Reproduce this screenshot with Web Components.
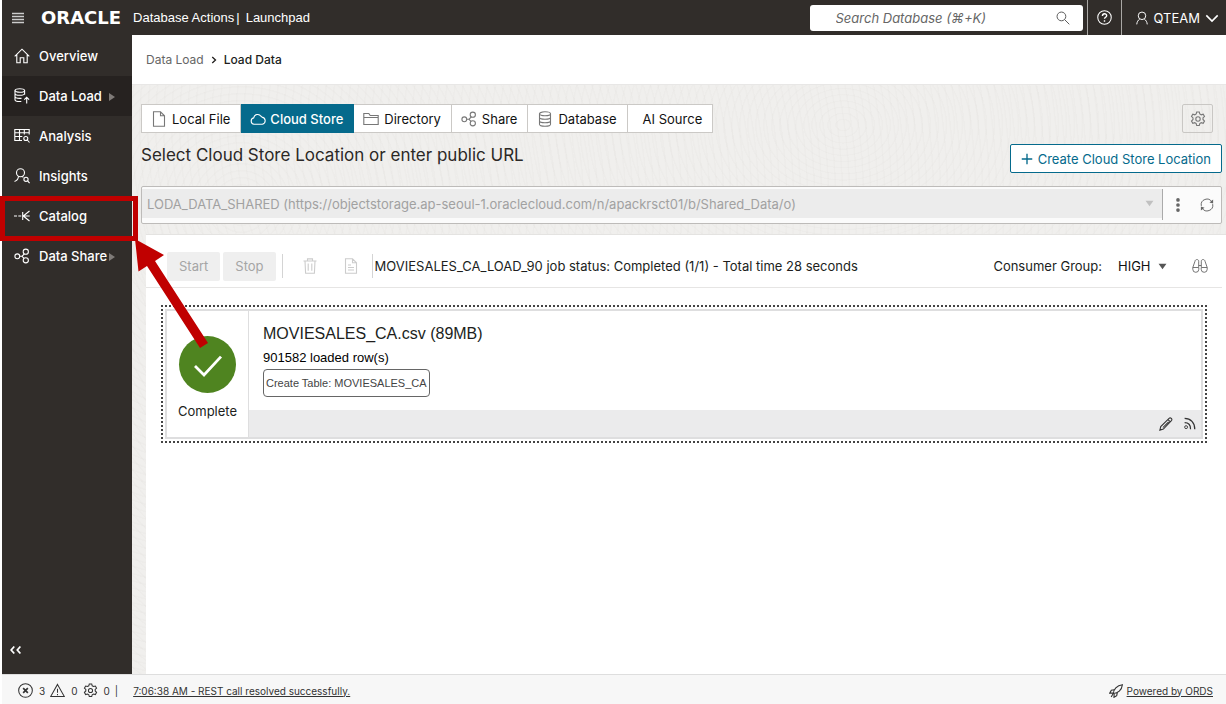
<!DOCTYPE html>
<html lang="en">
<head>
<meta charset="utf-8">
<title>Database Actions | Launchpad</title>
<style>
  html, body { margin: 0; background: #fff; }
  body { font: 13px/20px Inter, "Liberation Sans", sans-serif; color: #201e1c; }
</style>
</head>
<body>
<db-app></db-app>

<script>
const RESET = `*{box-sizing:border-box} button,input,select{font:inherit;color:inherit;margin:0;padding:0;border:0;background:none;border-radius:0} a{color:inherit;text-decoration:none}`;

function define(name, css, html) {
  const tpl = document.createElement('template');
  tpl.innerHTML = `<style>${RESET}${css}</style>${html}`;
  customElements.define(name, class extends HTMLElement {
    constructor() {
      super();
      this.attachShadow({ mode: 'open' }).append(tpl.content.cloneNode(true));
    }
  });
}

/* Icon set, each drawn on a 16 unit grid */
const ICONS = {
  menu: '<path stroke-width="1.8" d="M0 2h16M0 6h16M0 10h16M0 14h16"/>',
  home: '<path d="M.7 8.300L8 1.200l7.300 7.100M2.800 6.500v8.200h3.400V9.800h3.600v4.900h3.400V6.500"/>',
  load: '<ellipse cx="5.800" cy="2.500" rx="4.800" ry="1.800"/><path d="M1 2.500v9.200c0 1 2 1.800 4.800 1.800h1.500M10.600 2.500v4.200M1 5.500c0 1 2 1.800 4.800 1.800s4.800-.8 4.800-1.800M1 8.600c0 1 2 1.800 4.800 1.800h1.700M12.700 15.500V9.500M10.300 11.700l2.400-2.400 2.400 2.400"/>',
  analysis: '<path d="M8 12.500H.8V1.500h14.400v5M.8 4.700h14.400M.8 8.500h7.500M5.500 1.500v11M10.300 1.500v5"/><circle cx="11.800" cy="10.500" r="2"/><path d="M13.300 12l2.200 2.500"/>',
  insights: '<circle cx="6.500" cy="4.800" r="4"/><path d="M4.500 8.300C4.300 11 2.800 12.800.5 13.500M8.500 8.300l.7 1.200"/><circle cx="12" cy="11.300" r="2.100"/><path d="M13.600 12.900l2 2.200"/>',
  catalog: '<path d="M0 8h3M4.300 8h3M8.700 8h7M8.700 4v8M9 8.300L15.500 3M9 7.700L15.500 13"/>',
  share: '<circle cx="3.300" cy="8.300" r="2.400"/><circle cx="11.800" cy="3.700" r="2.600"/><circle cx="11.800" cy="12.300" r="2.600"/><path d="M5.700 8.300h2.300M10.300 5.900L8 8.300l2 2.100"/>',
  file: '<path d="M2.500.8h7l4 4v10.400h-11zM9.500.8v4h4"/>',
  cloud: '<path d="M4 13.200a3.200 3.200 0 0 1-.3-6.300 4 4 0 0 1 7.300-1.600 3.300 3.300 0 0 1 1 .8 3.600 3.600 0 0 1 .3 7.100z"/>',
  folder: '<path d="M.8 13.500v-11h5l1.400 2h8v9zM.8 6.500h14.400"/>',
  database: '<ellipse cx="8" cy="2.800" rx="5.500" ry="2"/><path d="M2.500 2.800v10.400c0 1.100 2.500 2 5.500 2s5.500-.9 5.500-2V2.800M2.500 6.200c0 1.100 2.500 2 5.500 2s5.500-.9 5.500-2M2.500 9.700c0 1.100 2.500 2 5.500 2s5.500-.9 5.500-2"/>',
  gear: '<circle cx="8" cy="8" r="2.200"/><path d="M6.700 1h2.600l.5 2 1.400.8 2-.6 1.300 2.300-1.500 1.400v1.600l1.500 1.500-1.300 2.300-2-.6-1.400.8-.5 2H6.700l-.5-2-1.400-.8-2 .6L1.500 10l1.500-1.500V6.900L1.500 5.500l1.300-2.300 2 .6 1.400-.8z"/>',
  search: '<circle cx="6.200" cy="6.200" r="5"/><path d="M9.800 9.800l5.400 5.400"/>',
  help: '<circle cx="8" cy="8" r="7.200"/><path stroke-width="1.500" d="M5.800 6.300c0-3 4.500-3 4.500-.3 0 1.700-2.300 1.700-2.300 3.400M8 11v1.400"/>',
  user: '<circle cx="8" cy="5.500" r="4.300"/><path d="M5.500 9C3.500 10.500 2.200 12.500 2 15.300M10.500 9c2 1.500 3.300 3.500 3.500 6.300"/>',
  chevron: '<path stroke-width="1.800" d="M1.500 5L8 11.500 14.500 5"/>',
  next: '<path stroke-width="2.600" d="M4.500 2L11 8l-6.500 6"/>',
  plus: '<path stroke-width="1.800" d="M8 1v14M1 8h14"/>',
  dots: '<g fill="currentColor" stroke="none"><circle cx="8" cy="2.200" r="2.100"/><circle cx="8" cy="8" r="2.100"/><circle cx="8" cy="13.800" r="2.100"/></g>',
  refresh: '<path d="M1.500 9A6.500 6.500 0 0 1 13.500 4.500M14.500 7A6.500 6.500 0 0 1 2.500 11.500"/><path fill="currentColor" stroke="none" d="M15 1.800v4.400l-4.200-1.200zM1 14.200V9.800L5.200 11z"/>',
  trash: '<path d="M1.500 3h13M5.500 3V.9h5V3M3 3l.6 12.200h8.800L13 3M6.200 5.500v7.200M9.800 5.500v7.200"/>',
  doc: '<path d="M2.500.8h7l4 4v10.400h-11zM9.500.8v4h4M5 7h3M5 9.500h6M5 12h6"/>',
  binoculars: '<path stroke-width=".9" d="M3 3.200C3.300 1 6.700 1 6.700 3.200V9M13 3.200C12.700 1 9.300 1 9.300 3.200V9M3 3.200L.8 9.500v1.800a3 3 0 0 0 6 0V9.500h-6M13 3.200l2.200 6.300v1.800a3 3 0 0 1-6 0V9.500h6M6.800 7.500h2.400"/>',
  check: '<path d="M1.500 8.500l4.500 4.500L14.500 3.800"/>',
  pencil: '<path stroke-width="1.200" d="M1 15l1-4L11.500 1.500c1.700-1.500 4.200 1 2.700 2.700L5 13.800zM10.300 3l2.700 2.700M4.500 12l6.500-6.500"/>',
  feed: '<circle cx="3.800" cy="12.500" r="1.800"/><path stroke-width="1.500" d="M2 7c4.500 0 7.300 3 7.300 8M2 1.800c7.500 0 12.500 5 12.500 13.200"/>',
  collapse: '<path stroke-width="2" d="M6 4L2.500 8 6 12M13 4L9.500 8l3.500 4"/>',
  error: '<circle cx="8" cy="8" r="7.300"/><path stroke-width="1.800" d="M5.500 5.500l5 5M10.500 5.500l-5 5"/>',
  warning: '<path d="M8 1.500L15.300 14.500H.7zM8 6v4.500M8 11.700v1.300"/>',
  rocket: '<path stroke-width="1.300" d="M5 10.800c0-4.500 4-9.300 10.300-10C14.600 7 10 11 5 10.800zM6 6.500l-3.300.7L.8 10.500l4.200-.2M9.500 10l-.7 3.300L5.700 15.200l.2-4M4.500 11.500l-2 3.300"/>',
  caret: '<path fill="currentColor" stroke="none" d="M1 3h14L8 13z"/>',
  arrow: '<path fill="currentColor" stroke="none" d="M2 0v16l12-8z"/>'
};
customElements.define('db-icon', class extends HTMLElement {
  connectedCallback() {
    if (this.shadowRoot) return;
    const s = this.getAttribute('size') || 16;
    this.attachShadow({ mode: 'open' }).innerHTML =
      `<style>:host{display:inline-flex;flex:none}svg{display:block;fill:none;stroke:currentColor;stroke-width:var(--stroke,1.1)}</style>
       <svg width="${s}" height="${s}" viewBox="0 0 16 16" aria-hidden="true">${ICONS[this.getAttribute('name')]}</svg>`;
  }
});

define('db-header', `
  :host{display:flex;align-items:stretch;height:35px;background:#312d2a;color:#fff;font-family:"Liberation Sans",sans-serif}
  .menu{padding:0 10px;display:flex;align-items:center;color:#ccc}
  .brand{display:flex;align-items:center;flex:1;font-size:13px;white-space:nowrap}
  .logo{font:bold 18px/20px "DejaVu Sans",sans-serif;padding-left:7px;margin-right:12px;flex:none}
  .sep{margin:0 6px 0 2px}
  .search{align-self:center;display:flex;align-items:center;flex:0 1 273px;height:26px;margin-right:4px;padding:0 13px 0 26px;background:#fff;border-radius:3px;color:#555}
  input{flex:1;min-width:0;font:italic 13px/20px Inter,"DejaVu Sans",sans-serif;outline:0}
  input::placeholder{color:#666;opacity:1}
  .help,.user{display:flex;align-items:center;border-left:1px solid #aaa8a5}
  .help{width:34px;justify-content:center}
  .user{padding:0 7px 0 13px;gap:5px;font:13px/20px Inter,sans-serif}
`, `
  <button class="menu" aria-label="Menu"><db-icon name="menu" size="12"></db-icon></button>
  <div class="brand"><span class="logo">ORACLE</span><span>Database Actions</span><span class="sep">|</span><span>Launchpad</span></div>
  <label class="search"><input type="search" placeholder="Search Database (⌘+K)" aria-label="Search Database"><db-icon name="search" size="14"></db-icon></label>
  <button class="help" aria-label="Help"><db-icon name="help" size="15"></db-icon></button>
  <button class="user"><db-icon name="user" size="14"></db-icon>QTEAM<db-icon name="chevron" size="14"></db-icon></button>
`);

define('db-nav-item', `
  :host{display:block}
  :host([active]) a{background:#262220}
  a{display:flex;align-items:center;height:40px;padding-left:12px;gap:9px;color:#fff;font-weight:500}
  .text{flex:0 0 69px;white-space:nowrap}
  .more{display:none;color:#7f7b78;margin-left:-9px}
  :host([more]) .more{display:block}
`, `<a href="#"><slot name="icon"></slot><span class="text"><slot></slot></span><span class="more"><db-icon name="arrow" size="8"></db-icon></span></a>`);

define('db-nav', `
  :host{display:flex;flex-direction:column;flex:0 0 130px;background:#312d2a;color:#fff}
  nav{flex:1;padding-top:1px}
  button{align-self:flex-start;padding:0 0 17px 7px;display:flex}
`, `<nav><slot></slot></nav><button aria-label="Collapse"><db-icon name="collapse" size="14"></db-icon></button>`);

define('db-breadcrumbs', `
  :host{display:flex;align-items:center;gap:6px;height:49px;padding:1px 0 0 14px;background:#fff;font-size:12px}
  a{color:#666}
  b{font-weight:500}
`, `<a href="#">Data Load</a><db-icon name="next" size="8"></db-icon><b>Load Data</b>`);

define('db-tab', `
  :host{display:block}
  button{display:flex;align-items:center;gap:5px;height:29px;padding:0 10px 0 9px;background:#fff;border:1px solid #cbc9c6;border-left-width:0;color:#111;white-space:nowrap}
  :host([first]) button{border-left-width:1px}
  :host([selected]) button{background:#056a8c;border-color:#056a8c;color:#fff;font-weight:500;gap:4px}
  :host([plain]) button{padding-left:15px}
  ::slotted(db-icon){color:#777}
  :host([selected]) ::slotted(db-icon){color:#fff}
`, `<button role="tab"><slot name="icon"></slot><span><slot></slot></span></button>`);

define('db-tools', `
  :host{display:flex;justify-content:space-between;padding-right:13px}
  .tabs{display:flex}
  .set{width:31px;height:29px;border:1px solid #c9c7c4;border-radius:2px;display:flex;align-items:center;justify-content:center;color:#777}
`, `<div class="tabs" role="tablist"><slot></slot></div><button class="set" aria-label="Settings"><db-icon name="gear"></db-icon></button>`);

define('db-location', `
  :host{display:block;padding-right:4px}
  .row{display:flex;justify-content:space-between;height:52px}
  h1{margin:0;padding-top:10px;font-size:17px;line-height:24px;font-weight:400;color:#2b2826}
  .create{align-self:flex-start;margin-top:11px;height:29px;padding:0 10px;display:flex;align-items:center;gap:5px;border:1px solid #056a8c;border-radius:2px;background:#fff;color:#056a8c;white-space:nowrap}
  .bar{display:flex;height:38px;padding-top:2px;margin-top:1px;border:1px solid #bdbbb9;border-radius:2px;background:#fbfbfb}
  .pick{flex:1;display:flex;align-items:center;height:29px;background:#ececec;padding:0 8px 0 5px;color:#c0c0c0;min-width:0}
  select{appearance:none;flex:1;color:#a1a1a1;opacity:1;min-width:0}
  .act{display:flex;align-items:center;gap:15px;padding:0 7px 0 8px;border-left:1px solid #aaa;height:31px}
  .act button{display:flex;color:#666}
`, `
  <div class="row"><h1>Select Cloud Store Location or enter public URL</h1>
  <button class="create"><db-icon name="plus" size="12"></db-icon>Create Cloud Store Location</button></div>
  <div class="bar"><div class="pick"><select disabled aria-label="Cloud store location"><option>LODA_DATA_SHARED (https://objectstorage.ap-seoul-1.oraclecloud.com/n/apackrsct01/b/Shared_Data/o)</option></select><db-icon name="caret" size="9"></db-icon></div>
  <div class="act"><button aria-label="More"><db-icon name="dots" size="14"></db-icon></button><button aria-label="Refresh"><db-icon name="refresh" size="14"></db-icon></button></div></div>
`);

define('db-job-bar', `
  :host{display:flex;align-items:center;height:53px;padding:10px 14px 0 21px;margin-right:4px;border-bottom:1px solid #e6e5e4}
  .b{height:29px;padding:0 12px;background:#efefef;color:#a5a5a5;border-radius:2px;margin-right:3px}
  .line{width:1px;height:24px;background:#d4d4d4}
  .start{margin-left:3px}
  .tools{display:flex;gap:25px;margin:0 13px 0 19px;color:#ccc}
  .tools button{display:flex}
  .status{flex:1;padding-left:2px;white-space:nowrap}
  label{margin-right:16px;white-space:nowrap}
  .group{display:flex;align-items:center;gap:7px;margin-right:25px;color:#555}
  select{appearance:none;color:#111}
  .find{display:flex;color:#666}
`, `
  <button class="b" disabled>Start</button><button class="b" disabled>Stop</button>
  <span class="line start"></span>
  <div class="tools"><button aria-label="Delete"><db-icon name="trash"></db-icon></button><button aria-label="Report"><db-icon name="doc"></db-icon></button></div>
  <span class="line"></span><span class="status">MOVIESALES_CA_LOAD_90 job status: Completed (1/1) - Total time 28 seconds</span>
  <label for="g">Consumer Group:</label>
  <div class="group"><select id="g"><option>HIGH</option></select><db-icon name="caret" size="9"></db-icon></div>
  <button class="find" aria-label="Find"><db-icon name="binoculars"></db-icon></button>
`);

define('db-job-card', `
  :host{display:block;margin:17px 19px 0 15px;border:2px dotted #444;padding:2px}
  .card{display:flex;border:2px solid #dededf;min-height:130px}
  .state{flex:0 0 82px;display:flex;flex-direction:column;align-items:center;border-right:1px solid #dededf;padding-top:25px;gap:8px}
  .ok{width:57px;height:57px;border-radius:50%;background:#4f8420;color:#fff;display:flex;align-items:center;justify-content:center;--stroke:1.4}
  .main{flex:1;display:flex;flex-direction:column;font-family:"Liberation Sans",sans-serif}
  .info{flex:1;padding:11px 14px 0;display:flex;flex-direction:column;align-items:flex-start}
  h2{margin:0 0 2px;font-weight:400;font-size:16px;line-height:24px}
  .rows{color:#000}
  .tag{font-size:11px;height:28px;padding:0 2px;margin-top:1px;border:1px solid #666;border-radius:4px;color:#444}
  .foot{height:27px;background:#ebebec;display:flex;justify-content:flex-end;align-items:center;gap:10px;padding-right:5px;color:#333}
  .foot button{display:flex}
`, `
  <div class="card"><div class="state"><span class="ok"><db-icon name="check" size="32"></db-icon></span><span>Complete</span></div>
  <div class="main"><div class="info"><h2><slot name="file"></slot></h2><div class="rows"><slot name="rows"></slot></div><button class="tag"><slot name="action"></slot></button></div>
  <div class="foot"><button aria-label="Edit"><db-icon name="pencil" size="14"></db-icon></button><button aria-label="Feed"><db-icon name="feed" size="13"></db-icon></button></div></div></div>
`);

define('db-footer', `
  :host{display:flex;align-items:center;height:30px;padding:2px 13px 0 16px;background:#f7f7f7;border-top:1px solid #dedede;font-size:10px;color:#333}
  .n{display:flex;align-items:center;gap:6px;margin-right:5px}
  a{text-decoration:underline;white-space:nowrap}
  .msg{flex:1;margin-left:15px}
  .ords{display:flex;align-items:center;gap:4px;text-decoration:none}
  .ords span{text-decoration:underline}
`, `
  <span class="n"><db-icon name="error" size="15"></db-icon>3</span><span class="n"><db-icon name="warning" size="15"></db-icon>0</span><span class="n"><db-icon name="gear" size="15"></db-icon>0</span><span>|</span>
  <span class="msg"><a href="#">7:06:38 AM - REST call resolved successfully.</a></span>
  <a class="ords" href="#"><db-icon name="rocket" size="14"></db-icon><span>Powered by ORDS</span></a>
`);

/* Callout laid over the page: a frame round Catalog and an arrow from the job card */
define('db-callout', `
  :host{position:absolute;left:0;top:196px;pointer-events:none}
  svg{display:block}
`, `<svg width="212" height="156" viewBox="0 0 212 156" aria-hidden="true"><rect x="2.500" y="2.500" width="133" height="40" fill="none" stroke="#c00000" stroke-width="5"/><path fill="#c00000" d="M135 43l29 16-9 6 53 82-8 5-53-82-8.500 5.500z"/></svg>`);

define('db-app', `
  :host{display:flex;flex-direction:column;min-height:100vh;position:relative;padding-left:2px;box-sizing:border-box}
  .body{flex:1;display:flex}
  main{flex:1;min-width:0;display:flex;flex-direction:column}
  .content{flex:1;display:flex;flex-direction:column;padding:19px 0 0 9px;border-top:1px solid #e8e7e6;
    background:
      repeating-radial-gradient(circle at 10% 120px,transparent 0 5px,rgba(120,110,100,.025) 6px 7px),
      repeating-radial-gradient(ellipse at 65% 40px,transparent 0 6px,rgba(120,110,100,.025) 7px 8px),
      #f0efed}
  .panel{flex:1;margin:10px 0 0 5px;background:#fff;border-top:1px solid #e4e3e1}
`, `
  <db-header></db-header>
  <div class="body">
    <db-nav>
      <db-nav-item><db-icon slot="icon" name="home" size="16"></db-icon>Overview</db-nav-item>
      <db-nav-item active more><db-icon slot="icon" name="load" size="16"></db-icon>Data Load</db-nav-item>
      <db-nav-item><db-icon slot="icon" name="analysis" size="16"></db-icon>Analysis</db-nav-item>
      <db-nav-item><db-icon slot="icon" name="insights" size="16"></db-icon>Insights</db-nav-item>
      <db-nav-item><db-icon slot="icon" name="catalog" size="16"></db-icon>Catalog</db-nav-item>
      <db-nav-item more><db-icon slot="icon" name="share" size="16"></db-icon>Data Share</db-nav-item>
    </db-nav>
    <main>
      <db-breadcrumbs></db-breadcrumbs>
      <div class="content">
        <db-tools>
          <db-tab first><db-icon slot="icon" name="file"></db-icon>Local File</db-tab>
          <db-tab selected><db-icon slot="icon" name="cloud"></db-icon>Cloud Store</db-tab>
          <db-tab><db-icon slot="icon" name="folder"></db-icon>Directory</db-tab>
          <db-tab><db-icon slot="icon" name="share"></db-icon>Share</db-tab>
          <db-tab><db-icon slot="icon" name="database"></db-icon>Database</db-tab>
          <db-tab plain>AI Source</db-tab>
        </db-tools>
        <db-location></db-location>
        <section class="panel">
          <db-job-bar></db-job-bar>
          <db-job-card><span slot="file">MOVIESALES_CA.csv (89MB)</span><span slot="rows">901582 loaded row(s)</span><span slot="action">Create Table: MOVIESALES_CA</span></db-job-card>
        </section>
      </div>
    </main>
  </div>
  <db-footer></db-footer>
  <db-callout></db-callout>
`);
</script>
</body>
</html>
